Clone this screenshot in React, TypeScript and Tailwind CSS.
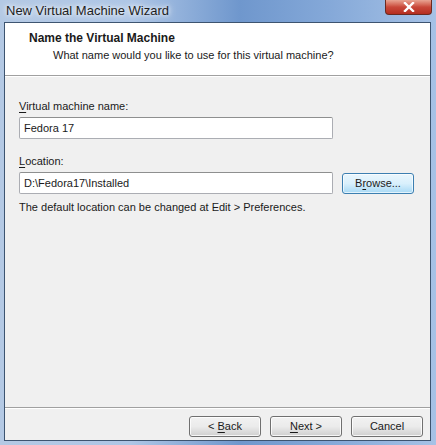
import React from 'react';

const font = { fontFamily: '"Liberation Sans", Arial, sans-serif' };

const Key: React.FC<{ children: React.ReactNode }> = ({ children }) => (
  <span className="underline underline-offset-2">{children}</span>
);

const WinButton: React.FC<{ children: React.ReactNode; primary?: boolean }> = ({ children, primary }) => (
  <button
    className={
      'h-[21px] w-[72px] rounded-[3px] border text-[11px] leading-none text-[#1a1a1a] ' +
      (primary
        ? 'border-[#3c7fb1] bg-gradient-to-b from-[#eaf6fd] via-[#d9f0fc] to-[#a7d9f5] shadow-[inset_0_0_0_1px_#ffffffaa]'
        : 'border-[#707070] bg-gradient-to-b from-[#f2f2f2] via-[#ebebeb] to-[#cfcfcf] shadow-[inset_0_0_0_1px_#ffffffcc]')
    }
  >
    {children}
  </button>
);

const App: React.FC = () => {
  return (
    <div
      className="flex h-[445px] w-[436px] flex-col bg-[linear-gradient(90deg,#b4c9e4_0%,#aec6e6_30%,#6f97cd_55%,#84a8d8_75%,#a6c2e6_100%)]"
      style={font}
    >
      {/* title bar */}
      <div className="relative flex h-[22px] shrink-0 items-center pl-[6px]">
        <span className="text-[13px] text-[#1e1e1e] [text-shadow:0_0_8px_#ffffff,0_0_4px_#ffffff]">New Virtual Machine Wizard</span>
        <div className="absolute right-[4px] top-0 flex h-[15px] w-[47px] items-center justify-center rounded-b-[4px] border border-t-0 border-[#6b2a20] bg-gradient-to-b from-[#e8a493] via-[#c9483a] to-[#b52e1f]">
          <svg width="12" height="10" viewBox="0 0 12 10">
            <path d="M2 1 L10 9 M10 1 L2 9" stroke="#ffffff" strokeWidth="2.4" strokeLinecap="square" />
          </svg>
        </div>
      </div>

      {/* client area */}
      <div className="mb-[4px] ml-[4px] mr-[5px] flex flex-1 flex-col border border-[#3d5470] bg-[#f0f0f0]">
        <div className="flex h-[53px] shrink-0 flex-col border-b border-[#a0a0a0] bg-white pl-[24px] pt-[7px] text-[#1a1a1a]">
          <div className="text-[12px] font-bold leading-[17px]">Name the Virtual Machine</div>
          <div className="pl-[24px] text-[11px] leading-[17px]">What name would you like to use for this virtual machine?</div>
        </div>
        <div className="h-px bg-white" />

        <div className="flex flex-1 flex-col px-[14px] pt-[21px] text-[11px] text-[#1a1a1a]">
          <label className="leading-[16px]">
            <Key>V</Key>irtual machine name:
          </label>
          <div className="mt-[3px] flex h-[22px] w-[314px] items-center rounded-[2px] border border-[#abadb3] border-t-[#8e8f8f] bg-white pl-[4px]">
            Fedora 17
          </div>

          <label className="mt-[14px] leading-[16px]">
            <Key>L</Key>ocation:
          </label>
          <div className="mt-[3px] flex items-center gap-[9px]">
            <div className="flex h-[22px] w-[314px] items-center rounded-[2px] border border-[#abadb3] border-t-[#8e8f8f] bg-white pl-[4px]">
              D:\Fedora17\Installed
            </div>
            <WinButton primary>
              B<Key>r</Key>owse...
            </WinButton>
          </div>

          <p className="mt-[5px] leading-[16px]">The default location can be changed at Edit &gt; Preferences.</p>
        </div>

        <div className="h-px bg-[#a0a0a0]" />
        <div className="h-px bg-white" />
        <div className="flex h-[31px] shrink-0 items-start justify-end gap-[9px] pr-[7px] pt-[7px]">
          <WinButton>
            &lt; <Key>B</Key>ack
          </WinButton>
          <WinButton>
            <Key>N</Key>ext &gt;
          </WinButton>
          <WinButton>Cancel</WinButton>
        </div>
      </div>
    </div>
  );
};

export default App;
